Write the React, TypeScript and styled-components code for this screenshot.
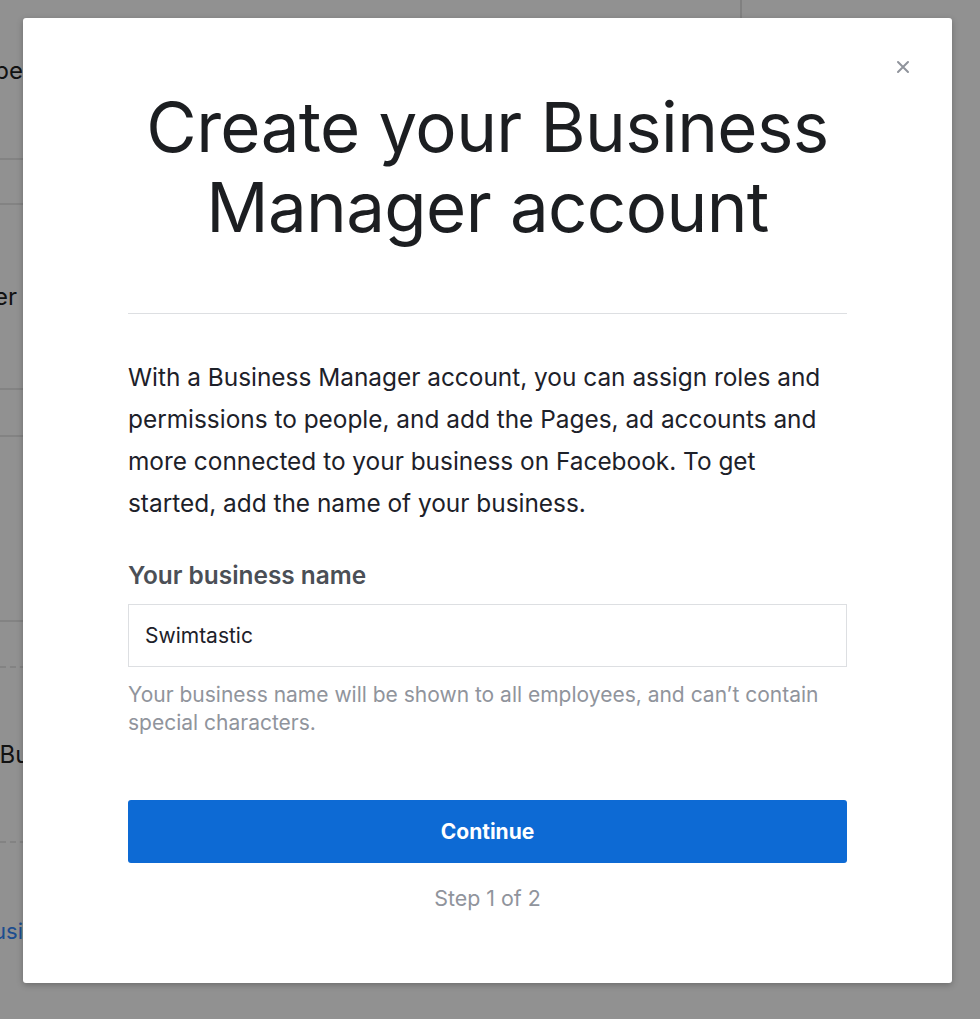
import React from "react";
import styled, { createGlobalStyle } from "styled-components";

const Global = createGlobalStyle`
  html, body { margin: 0; padding: 0; }
  body {
    background: #919191;
    font-family: Inter, "Liberation Sans", Arial, sans-serif;
    -webkit-font-smoothing: antialiased;
  }
  * { box-sizing: border-box; }
`;

const Screen = styled.div`
  position: relative;
  width: 980px;
  height: 1019px;
  overflow: hidden;
  background: #919191;
`;

const BackPage = styled.div`
  display: flex;
  flex-direction: column;
  height: 100%;
`;

const BackTop = styled.div`
  height: 18px;
  display: flex;
`;

const BackTopCell = styled.div`
  width: 742px;
  border-right: 2px solid #808080;
`;

const BackRow = styled.div<{ $h: number; $line?: "solid" | "dashed"; $pb?: number }>`
  height: ${(p) => p.$h}px;
  display: flex;
  align-items: center;
  padding-bottom: ${(p) => p.$pb ?? 0}px;
  width: 742px;
  border-bottom: ${(p) => (p.$line ? `2px ${p.$line} #838383` : "0")};
`;

const BackCell = styled.div<{ $end: number }>`
  width: ${(p) => p.$end}px;
  display: flex;
  justify-content: flex-end;
  white-space: nowrap;
`;

const BackText = styled.span<{ $link?: boolean }>`
  color: ${(p) => (p.$link ? "#1c4d8f" : "#121212")};
  font-size: ${(p) => (p.$link ? 22 : 24)}px;
`;

const Overlay = styled.div`
  position: absolute;
  inset: 0;
  padding: 18px 0 0 23px;
  display: flex;
  align-items: flex-start;
`;

const Card = styled.div`
  position: relative;
  width: 929px;
  height: 965px;
  background: #ffffff;
  border-radius: 3px;
  box-shadow: 0 2px 6px rgba(0, 0, 0, 0.25);
  padding: 69px 105px 0;
  display: flex;
  flex-direction: column;
`;

const Close = styled.button`
  position: absolute;
  top: 39px;
  right: 39px;
  width: 20px;
  height: 20px;
  padding: 0;
  border: 0;
  background: transparent;
  display: flex;
  align-items: center;
  justify-content: center;
`;

const Title = styled.h1`
  margin: 0;
  font-size: 69px;
  line-height: 80px;
  font-weight: 400;
  letter-spacing: -0.6px;
  color: #1c1e21;
  text-align: center;
`;

const Rule = styled.hr`
  margin: 66px 0 0;
  border: 0;
  border-top: 1px solid #dddfe2;
`;

const Body = styled.p`
  margin: 42px 0 0;
  font-size: 24.4px;
  line-height: 42px;
  color: #1d2129;
`;

const Label = styled.label`
  display: block;
  margin-top: 37px;
  font-size: 24.4px;
  line-height: 28px;
  font-weight: 600;
  color: #4b4f56;
`;

const Input = styled.input`
  display: block;
  margin-top: 15px;
  width: 100%;
  height: 63px;
  border: 1px solid #dddfe2;
  border-radius: 0;
  padding: 0 16px;
  font-family: inherit;
  font-size: 21px;
  color: #1d2129;
  outline: none;
`;

const Help = styled.p`
  margin: 14px 0 0;
  font-size: 21px;
  line-height: 28px;
  color: #90949c;
`;

const Primary = styled.button`
  margin-top: 63px;
  width: 100%;
  height: 63px;
  border: 0;
  border-radius: 3px;
  background: #0d6ad4;
  color: #ffffff;
  font-family: inherit;
  font-size: 21px;
  font-weight: 700;
`;

const Step = styled.div`
  margin-top: 22px;
  text-align: center;
  font-size: 21.4px;
  line-height: 26px;
  color: #90949c;
`;

export default function App() {
  return (
    <Screen>
      <Global />
      <BackPage>
        <BackTop>
          <BackTopCell />
        </BackTop>
        <BackRow $h={142} $line="solid" $pb={36}>
          <BackCell $end={23}>
            <BackText>Choose who can be</BackText>
          </BackCell>
        </BackRow>
        <BackRow $h={45} $line="solid" />
        <BackRow $h={185} $line="solid">
          <BackCell $end={17}>
            <BackText>Business Manager</BackText>
          </BackCell>
        </BackRow>
        <BackRow $h={47} $line="solid" />
        <BackRow $h={185} $line="solid" />
        <BackRow $h={46} $line="dashed" />
        <BackRow $h={175} $line="dashed" $pb={-6}>
          <BackCell $end={42}>
            <BackText>Create a new Bus</BackText>
          </BackCell>
        </BackRow>
        <BackRow $h={176}>
          <BackCell $end={36}>
            <BackText $link>Learn more about Busin</BackText>
          </BackCell>
        </BackRow>
      </BackPage>
      <Overlay>
        <Card>
          <Close aria-label="Close">
            <svg width="14" height="14" viewBox="0 0 14 14">
              <path d="M2 2 L12 12 M12 2 L2 12" stroke="#90949c" strokeWidth="2" strokeLinecap="round" />
            </svg>
          </Close>
          <Title>
            Create your Business
            <br />
            Manager account
          </Title>
          <Rule />
          <Body>
            With a Business Manager account, you can assign roles and permissions to people, and add the Pages, ad
            accounts and more connected to your business on Facebook. To get started, add the name of your business.
          </Body>
          <Label htmlFor="bizname">Your business name</Label>
          <Input id="bizname" defaultValue="Swimtastic" />
          <Help>Your business name will be shown to all employees, and can’t contain special characters.</Help>
          <Primary>Continue</Primary>
          <Step>Step 1 of 2</Step>
        </Card>
      </Overlay>
    </Screen>
  );
}
